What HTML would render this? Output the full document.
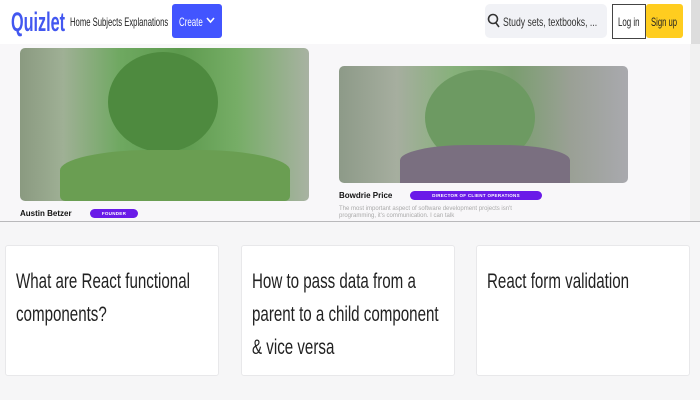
<!DOCTYPE html>
<html><head><style>
*{margin:0;padding:0;box-sizing:border-box}
body{width:700px;height:400px;overflow:hidden;background:#f6f6f7;font-family:"Liberation Sans",sans-serif;position:relative}
.a{position:absolute}
.sx{display:inline-block;transform-origin:left top;white-space:nowrap}
.card{position:absolute;top:245px;width:214px;height:131px;background:#fff;border:1px solid #e8e8ea;border-radius:3px}
.card .t{position:absolute;left:10px;top:19px;font-size:21px;line-height:33px;color:#222;transform:scaleX(0.72);transform-origin:left top;width:300px}
.badge{position:absolute;height:9px;border-radius:5px;background:#6a1be8;color:#fff;font-size:4.5px;font-weight:bold;line-height:9px;text-align:center;letter-spacing:0.3px}
</style></head><body>
<div class="a" style="left:0;top:0;width:700px;height:44px;background:#fff"></div>
<div class="a" style="left:11px;top:7px;font-size:27px;font-weight:bold;color:#4257f0"><span class="sx" style="transform:scaleX(0.6)">Quizlet</span></div>
<div class="a" style="left:70px;top:15px;font-size:12px;color:#222"><span class="sx" style="transform:scaleX(0.64)">Home Subjects Explanations</span></div>
<div class="a" style="left:172px;top:4px;width:50px;height:34px;background:#4255ff;border-radius:3px"></div>
<div class="a" style="left:179px;top:15px;font-size:12px;color:#fff"><span class="sx" style="transform:scaleX(0.66)">Create</span></div>
<svg class="a" style="left:206px;top:17px" width="9" height="7"><path d="M1 1L4.5 5L8 1" stroke="#fff" stroke-width="1.6" fill="none"/></svg>
<div class="a" style="left:485px;top:4px;width:122px;height:34px;background:#f1f2f6;border-radius:5px"></div>
<svg class="a" style="left:487px;top:12px" width="14" height="18"><circle cx="6" cy="7" r="4.5" stroke="#333" stroke-width="1.6" fill="none"/><path d="M9 11L12 15" stroke="#333" stroke-width="1.6"/></svg>
<div class="a" style="left:503px;top:15px;font-size:12px;color:#333"><span class="sx" style="transform:scaleX(0.72)">Study sets, textbooks, ...</span></div>
<div class="a" style="left:612px;top:4px;width:34px;height:35px;border:1px solid #444;background:#fff"></div>
<div class="a" style="left:618px;top:15px;font-size:12px;color:#222"><span class="sx" style="transform:scaleX(0.66)">Log in</span></div>
<div class="a" style="left:646px;top:4px;width:37px;height:34px;background:#ffcd1f;border-radius:3px"></div>
<div class="a" style="left:651px;top:15px;font-size:12px;color:#222"><span class="sx" style="transform:scaleX(0.64)">Sign up</span></div>
<div class="a" style="left:691px;top:0;width:9px;height:44px;background:#ddd"></div>
<div class="a" style="left:0;top:44px;width:690px;height:177px;background:#f8f7f9"></div>
<div class="a" style="left:690px;top:44px;width:10px;height:177px;background:#f1f1f1"></div>
<div class="a" style="left:20px;top:48px;width:289px;height:153px;border-radius:5px;background:linear-gradient(90deg,#8a9a80 0%,#9fb095 15%,#6ea860 35%,#5d9a4e 55%,#76ad66 75%,#a8b2a2 100%)"></div>
<div class="a" style="left:108px;top:52px;width:110px;height:100px;border-radius:50%;background:#4e8a3f"></div>
<div class="a" style="left:60px;top:150px;width:230px;height:51px;border-radius:40% 40% 5px 5px;background:#6a9e52"></div>
<div class="a" style="left:339px;top:66px;width:289px;height:117px;border-radius:5px;background:linear-gradient(90deg,#8d9a88 0%,#a6ae9f 20%,#86b17a 40%,#7a9e6f 60%,#9aa095 80%,#a9a9ae 100%)"></div>
<div class="a" style="left:425px;top:70px;width:110px;height:95px;border-radius:50%;background:#6d9a62"></div>
<div class="a" style="left:400px;top:145px;width:170px;height:38px;border-radius:40% 40% 0 0;background:#7a6f80"></div>
<div class="a" style="left:20px;top:209px;font-size:8px;font-weight:bold;color:#111">Austin Betzer</div>
<div class="badge" style="left:90px;top:209px;width:48px">FOUNDER</div>
<div class="a" style="left:339px;top:191px;font-size:8px;font-weight:bold;color:#111">Bowdrie Price</div>
<div class="badge" style="left:410px;top:191px;width:132px">DIRECTOR OF CLIENT OPERATIONS</div>
<div class="a" style="left:339px;top:206px;font-size:6px;color:#aaa;line-height:7px">The most important aspect of software development projects isn't<br>programming, it's communication. I can talk</div>
<div class="a" style="left:0;top:221px;width:700px;height:1px;background:#b9b9bb"></div>
<div class="card" style="left:5px"><div class="t">What are React functional<br>components?</div></div>
<div class="card" style="left:241px"><div class="t">How to pass data from a<br>parent to a child component<br>&amp; vice versa</div></div>
<div class="card" style="left:476px"><div class="t">React form validation</div></div>
</body></html>
